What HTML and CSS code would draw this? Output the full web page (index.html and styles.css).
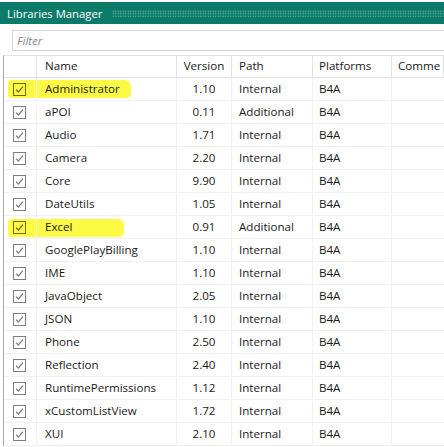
FILE: index.html
```html
<!DOCTYPE html>
<html>
<head>
<meta charset="utf-8">
<link rel="stylesheet" href="styles.css">
</head>
<body>
<div class="window">
  <div class="titlebar">
    <span class="title">Libraries Manager</span>
    <span class="grip"></span>
  </div>
  <div class="filter-wrap">
    <div class="filter">Filter</div>
  </div>
  <div class="grid">
    <div class="row head">
      <div class="cell chk"></div>
      <div class="cell name">Name</div>
      <div class="cell ver hv">Version</div>
      <div class="cell path">Path</div>
      <div class="cell plat">Platforms</div>
      <div class="cell com">Comme</div>
    </div>
    <div id="rows"></div>
  </div>
</div>
<script src="app.js"></script>
</body>
</html>
```
FILE: app.js
```js
const data = [
  ["Administrator","1.10","Internal",1],
  ["aPOI","0.11","Additional",0],
  ["Audio","1.71","Internal",0],
  ["Camera","2.20","Internal",0],
  ["Core","9.90","Internal",0],
  ["DateUtils","1.05","Internal",0],
  ["Excel","0.91","Additional",2],
  ["GooglePlayBilling","1.10","Internal",0],
  ["IME","1.10","Internal",0],
  ["JavaObject","2.05","Internal",0],
  ["JSON","1.10","Internal",0],
  ["Phone","2.50","Internal",0],
  ["Reflection","2.40","Internal",0],
  ["RuntimePermissions","1.12","Internal",0],
  ["xCustomListView","1.72","Internal",0],
  ["XUI","2.10","Internal",0]
];
const check = '<svg class="box" width="13" height="13" viewBox="0 0 13 13"><rect x="0.5" y="0.5" width="12" height="12" fill="none" stroke="currentColor"/><path d="M3 6.6 L5.3 9 L10 3.6" fill="none" stroke="currentColor" stroke-width="1.2"/></svg>';
const rows = document.getElementById('rows');
rows.innerHTML = data.map(d => {
  const mark = d[3] ? `<span class="mark ${d[3]===1?'m1':'m2'}"></span>` : '';
  return `<div class="row${d[3]?' hl':''}">${mark}<div class="cell chk">${check}</div><div class="cell name">${d[0]}</div><div class="cell ver">${d[1]}</div><div class="cell path">${d[2]}</div><div class="cell plat">B4A</div><div class="cell com"></div></div>`;
}).join('');
```
FILE: styles.css
```css
html, body {
  margin: 0;
  padding: 0;
  background: #ffffff;
}
body {
  font-family: "Open Sans", "Noto Sans", sans-serif;
  font-size: 11.6px;
  color: #1a1a1a;
  width: 444px;
  height: 447px;
  overflow: hidden;
}
.window {
  padding-top: 2px;
  background: #ffffff;
}
.titlebar {
  height: 22px;
  background: #0c7a69;
  display: flex;
  align-items: center;
  padding-left: 7px;
  gap: 10px;
}
.title {
  color: #ffffff;
  font-size: 11.3px;
  white-space: nowrap;
}
.grip {
  flex: 1;
  height: 7px;
  margin-top: 1px;
  background-image: radial-gradient(circle, rgba(160,215,200,0.75) 0.6px, transparent 0.9px);
  background-size: 2.5px 2.5px;
}
.filter-wrap {
  padding: 6px 0 4px 12px;
}
.filter {
  height: 19px;
  border: 1px solid #d6d6d6;
  border-right: none;
  font-style: italic;
  color: #8a8a8a;
  padding-left: 4px;
  line-height: 19px;
  font-size: 11.5px;
}
.grid {
  margin-left: 3px;
  border-left: 1px solid #a8a8a8;
  border-top: 1px solid #e3e3e3;
}
.row {
  position: relative;
  display: grid;
  grid-template-columns: 33px 140px 55px 81px 79px 1fr;
  height: 23px;
  border-bottom: 1px solid #f1f1f1;
  box-sizing: border-box;
}
.row.head {
  height: 22px;
  border-bottom: 1px solid #e3e3e3;
  background: #ffffff;
}
.cell {
  display: flex;
  align-items: center;
  white-space: nowrap;
  overflow: hidden;
  border-right: 1px solid #f1f1f1;
  position: relative;
  padding-bottom: 2px;
  box-sizing: border-box;
}
.head .cell {
  border-right: 1px solid #e3e3e3;
}
.chk {
  justify-content: center;
  padding-right: 2px;
  padding-bottom: 0;
  color: #7e7e7e;
}
.hl .chk { color: #6f6a10; }
.name { padding-left: 8px; }
.ver { justify-content: center; }
.path { padding-left: 7px; }
.plat { padding-left: 6px; }
.com { padding-left: 6px; border-right: none; }
.mark {
  position: absolute;
  left: 4px;
  top: 2px;
  height: 18px;
  background: #fdfa45;
  border-radius: 3px 6px 5px 3px;
}
.m1 { width: 123px; }
.m2 { width: 116px; top: 3px; }
.box { display: block; }
```
